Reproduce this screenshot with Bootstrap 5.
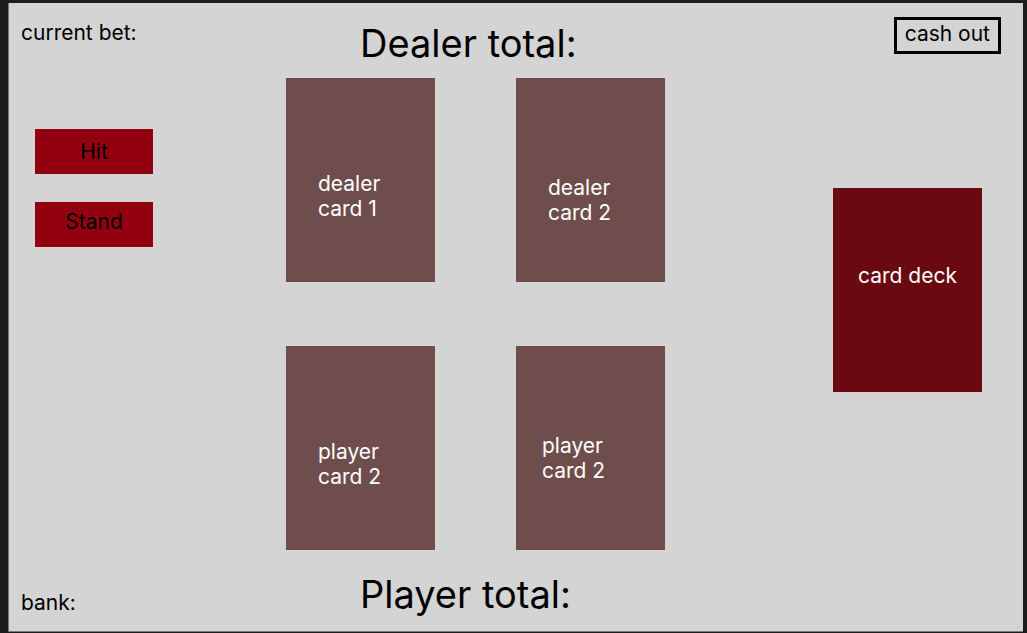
<!DOCTYPE html>
<html lang="en">
<head>
<meta charset="utf-8">
<meta name="viewport" content="width=device-width, initial-scale=1">
<title>Blackjack table</title>
<link href="https://cdn.jsdelivr.net/npm/bootstrap@5.3.0/dist/css/bootstrap.min.css" rel="stylesheet">
<style>
  body {
    font-family: Inter, "Liberation Sans", sans-serif;
    font-size: 21px;
    line-height: 25px;
    color: #000;
    background: #1d1d1d;
    padding: 3px 4px 1px 8px;
  }
  .game-table {
    display: grid;
    grid-template-columns: 277px auto 1fr;
    min-height: calc(100vh - 4px);
    background: #d4d4d4;
    border: solid #777;
    border-width: 0 0 1px 1px;
  }
  .side-left { padding: 17px 12px 16px; }
  .actions { margin: 84px 0 0 14px; gap: 28px; }
  .btn-action {
    width: 118px;
    height: 45px;
    padding: 0;
    border: 0;
    border-radius: 0;
    font-size: 21px;
    line-height: 25px;
    color: #000;
    background: #930010;
  }
  .btn-action:hover { color: #000; background: #a80012; }
  .btn-raised { padding-bottom: 7px; }
  .total-title {
    margin: 0;
    padding-left: 74px;
    font-size: 38px;
    font-weight: 400;
    line-height: 47px;
  }
  .center-board { padding: 17px 0 11px; }
  .hands { gap: 64px; margin: 11px 0 21px; }
  .hand { gap: 81px; }
  .play-card {
    width: 149px;
    height: 204px;
    padding: 93px 32px 0;
    color: #fff;
    background: #6f4d4c;
  }
  .label-low { padding-top: 97px; }
  .label-high { padding: 87px 26px 0; }
  .side-right { padding: 14px 22px 0 0; }
  .btn-cash {
    height: 37px;
    padding: 0 8px 5px;
    border: 3px solid #000;
    border-radius: 0;
    font-size: 21px;
    line-height: 25px;
    color: #000;
  }
  .btn-cash:hover { color: #fff; background: #000; }
  .deck {
    margin: 134px 19px 0 0;
    padding: 75px 0 0;
    background: #6a0a10;
  }
</style>
</head>
<body>
<main class="game-table">
  <section class="side-left d-flex flex-column">
    <div>current bet:</div>
    <div class="actions d-flex flex-column">
      <button type="button" class="btn btn-action">Hit</button>
      <button type="button" class="btn btn-action btn-raised">Stand</button>
    </div>
    <div class="mt-auto">bank:</div>
  </section>

  <section class="center-board d-flex flex-column">
    <h1 class="total-title">Dealer total:</h1>
    <div class="hands d-flex flex-column">
      <div class="hand d-flex">
        <div class="play-card">dealer<br>card 1</div>
        <div class="play-card label-low">dealer<br>card 2</div>
      </div>
      <div class="hand d-flex">
        <div class="play-card">player<br>card 2</div>
        <div class="play-card label-high">player<br>card 2</div>
      </div>
    </div>
    <h2 class="total-title">Player total:</h2>
  </section>

  <section class="side-right d-flex flex-column align-items-end">
    <button type="button" class="btn btn-cash">cash out</button>
    <div class="play-card deck text-center">card deck</div>
  </section>
</main>
<script src="https://cdn.jsdelivr.net/npm/bootstrap@5.3.0/dist/js/bootstrap.bundle.min.js"></script>
</body>
</html>
